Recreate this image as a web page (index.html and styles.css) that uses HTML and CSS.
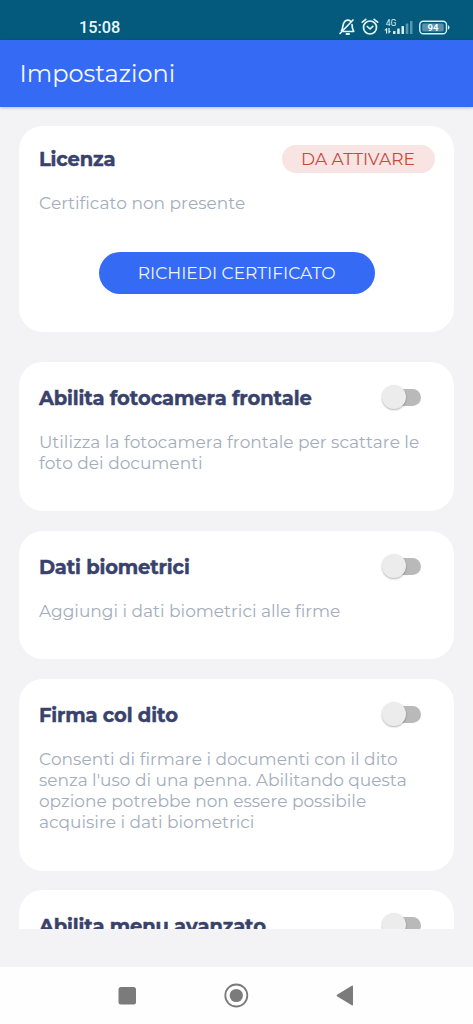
FILE: index.html
```html
<!DOCTYPE html>
<html lang="it">
<head>
<meta charset="utf-8">
<title>Impostazioni</title>
<link rel="stylesheet" href="styles.css">
</head>
<body>
<div class="screen">
  <div class="status">
    <span class="clock">15:08</span>
    <svg class="status-icons" width="114" height="22" viewBox="0 0 114 22" fill="none">
      <g stroke="#e3f6fa" stroke-width="1.7" stroke-linecap="round" stroke-linejoin="round">
        <path d="M5.500 14.500C7.500 12 6 8 9 5.200Q12 3 14.500 5.200M16 8.500Q16 12.500 17.700 15.500H7.500M4 17.500L17 4"/>
        <path d="M10.500 18H13" stroke-width="2"/>
        <circle cx="34" cy="11.500" r="6.500"/>
        <path d="M31.300 10.500L34 13L36.800 10.300M26.300 6.200L29.800 3.300M38.100 3.300L41.600 6.200"/>
      </g>
      <text class="network" x="49.700" y="9.500">4G</text>
      <g fill="#d9eff5">
        <path d="M50.500 12L48.300 14.500H50V17.500H51.200V12ZM53 17.500L55 15H53.700V12H52.400V17.500Z"/>
        <rect x="57" y="15" width="2.500" height="3" rx=".6"/>
        <rect x="61.200" y="12.500" width="2.500" height="5.500" rx=".6"/>
        <rect x="65.500" y="10" width="2.500" height="8" rx=".6"/>
        <g opacity=".4"><rect x="69.800" y="7.500" width="2.500" height="10.500" rx=".6"/><rect x="74" y="5" width="2.500" height="13" rx=".6"/></g>
        <path d="M112 9.300Q113.500 9.500 113.500 11.500T112 13.500Z"/>
      </g>
      <rect x="83.800" y="5.200" width="26.700" height="12.600" rx="3.500" stroke="#d9eff5" stroke-width="1.400"/>
      <rect x="86.200" y="7.500" width="21.500" height="8" rx="1.500" fill="#5b91aa"/>
      <text class="charge" x="97" y="15.200">94</text>
    </svg>
  </div>
  <header class="appbar"><h1 class="appbar-title">Impostazioni</h1></header>
  <main class="content">
    <section class="card card-license">
      <div class="head"><h2 class="title">Licenza</h2><span class="badge">DA ATTIVARE</span></div>
      <p class="desc">Certificato non presente</p>
      <button class="request">RICHIEDI CERTIFICATO</button>
    </section>
    <section class="card">
      <div class="head"><h2 class="title">Abilita fotocamera frontale</h2><span class="switch"><span class="knob"></span></span></div>
      <p class="desc">Utilizza la fotocamera frontale per scattare le<br>foto dei documenti</p>
    </section>
    <section class="card">
      <div class="head"><h2 class="title">Dati biometrici</h2><span class="switch"><span class="knob"></span></span></div>
      <p class="desc">Aggiungi i dati biometrici alle firme</p>
    </section>
    <section class="card">
      <div class="head"><h2 class="title">Firma col dito</h2><span class="switch"><span class="knob"></span></span></div>
      <p class="desc">Consenti di firmare i documenti con il dito<br>senza l'uso di una penna. Abilitando questa<br>opzione potrebbe non essere possibile<br>acquisire i dati biometrici</p>
    </section>
    <section class="card">
      <div class="head"><h2 class="title">Abilita menu avanzato</h2><span class="switch"><span class="knob"></span></span></div>
    </section>
  </main>
  <nav class="navbar">
    <svg width="473" height="57" viewBox="0 0 473 57" fill="#7b7b7b">
      <rect x="118.500" y="20" width="17.500" height="17.500" rx="2.500"/>
      <circle cx="236.300" cy="28.500" r="11" fill="none" stroke="#7b7b7b" stroke-width="1.800"/>
      <circle cx="236.300" cy="28.500" r="6.600"/>
      <path d="M337 27.800Q336.200 28.500 337 29.200L351.800 38.300Q353 38.900 353 37.500V19.500Q353 18.100 351.800 18.700Z"/>
    </svg>
  </nav>
</div>
</body>
</html>
```
FILE: styles.css
```css
* { box-sizing: border-box; }
body { margin: 0; font-family: Montserrat, Inter, sans-serif; font-weight: 400; }
h1, h2, p { margin: 0; }
.screen { width: 473px; height: 1024px; display: flex; flex-direction: column; background: #f3f3f6; overflow: hidden; }
.status { height: 39.5px; flex: none; background: #045a7c; display: flex; justify-content: space-between; align-items: flex-start; padding: 16px 23px 0 79px; }
.clock { font: 500 16.3px/23px Roboto, sans-serif; color: #e6f8fb; }
.status-icons { display: block; }
.network { font: 400 8.5px Roboto, sans-serif; fill: #d9eff5; }
.charge { font: 700 9.5px Roboto, sans-serif; fill: #f2fbfd; text-anchor: middle; }
.appbar { height: 67px; flex: none; background: #356af5; box-shadow: 0 1px 3px rgba(0,0,0,.22); display: flex; align-items: center; padding: 1px 19.5px 0; }
.appbar-title { font-size: 24px; font-weight: 400; color: #f4f8ff; }
.content { height: 822.5px; flex: none; padding: 19.5px 19px 0 19.4px; overflow: hidden; }
.card { background: #fff; border-radius: 24px; padding: 21px 19.5px 37.4px; margin-bottom: 19.5px; }
.card-license { height: 206.2px; padding: 17.9px 19.5px 0; margin-bottom: 29.6px; }
.head { height: 30px; display: flex; align-items: center; justify-content: space-between; }
.title { font-size: 19.5px; font-weight: 700; line-height: 30px; letter-spacing: -.15px; color: #38426b; -webkit-text-stroke: .4px #38426b; white-space: nowrap; font-kerning: none; }
.desc { margin-top: 19.2px; font-size: 17px; line-height: 21px; color: #a3adbb; white-space: nowrap; font-variant-ligatures: none; font-kerning: none; }
.badge { width: 153px; height: 28px; border-radius: 14px; background: #f9e4e4; color: #c94a3b; display: flex; align-items: center; justify-content: center; font-size: 17px; }
.request { display: flex; align-items: center; justify-content: center; width: 276px; height: 42px; border: 0; border-radius: 21px; margin: 37.7px auto 0; background: #356af5; color: #eef5ff; font: inherit; font-size: 17.1px; }
.switch { width: 34px; height: 17px; margin-right: 13.5px; margin-top: -1.5px; border-radius: 9px; display: flex; align-items: center; background: #b9b9b9; }
.knob { width: 24px; height: 24px; flex: none; margin-left: -5px; border-radius: 50%; background: #ececec; box-shadow: 0 1px 2px rgba(0,0,0,.3); }
.navbar { height: 57px; margin-top: auto; flex: none; background: #fefefe; }
.navbar svg { display: block; }
```
